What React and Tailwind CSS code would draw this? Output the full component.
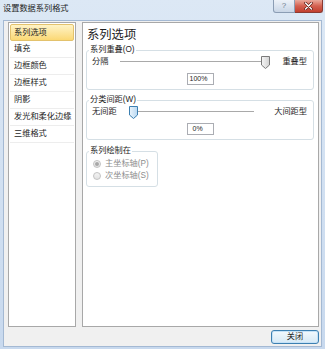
import React from 'react';

const FONT = { fontFamily: '"Liberation Sans", "Noto Sans CJK SC", sans-serif' };

const NAV_ITEMS = ['系列选项', '填充', '边框颜色', '边框样式', '阴影', '发光和柔化边缘', '三维格式'];

const Thumb = ({ active }) => (
    <svg width="9" height="13" viewBox="0 0 9 13">
        <defs>
            <linearGradient id={active ? 'thumbA' : 'thumbB'} x1="0" y1="0" x2="1" y2="0">
                <stop offset="0" stopColor={active ? '#eaf4fc' : '#f6f6f6'} />
                <stop offset="1" stopColor={active ? '#b9d8f2' : '#d2d2d2'} />
            </linearGradient>
        </defs>
        <path
            d="M0.5 0.5 H8.5 V9 L4.5 12.5 L0.5 9 Z"
            fill={`url(#${active ? 'thumbA' : 'thumbB'})`}
            stroke={active ? '#3c7fb1' : '#7a7a7a'}
            strokeWidth="1"
        />
    </svg>
);

const Slider = ({ at, active }) => (
    <div className="relative flex-1 h-[14px] flex items-center">
        <div
            className={`flex-1 h-[2px] border-t border-[#a9a9a9] bg-white ${at === 'left' ? 'mr-[8px]' : ''}`}
        />
        <div className={`absolute top-[1px] ${at === 'left' ? 'left-0' : 'right-0'}`}>
            <Thumb active={active} />
        </div>
    </div>
);

const Group = ({ label, className = '', children }) => (
    <fieldset className={`border border-[#d5dfe5] rounded-[3px] ${className}`}>
        <legend className="ml-[2px] px-[1px] leading-[10px] text-[8.2px] text-[#1e1e1e]">{label}</legend>
        {children}
    </fieldset>
);

const SliderGroup = ({ label, left, right, value, at, active, className, valuePad }) => (
    <Group label={label} className={className}>
        <div className="flex items-center h-[14px] pl-[5px] pr-[6px] text-[8.2px] leading-[10px] text-[#1e1e1e]">
            <span>{left}</span>
            <div className="flex-1 flex mx-[12px]">
                <Slider at={at} active={active} />
            </div>
            <span>{right}</span>
        </div>
        <div className="flex justify-center mt-[4px] pb-[4px]">
            <div
                className={`w-[27px] h-[12px] border border-[#abadb3] bg-white text-[7px] leading-[10px] text-[#1e1e1e] ${valuePad}`}
            >
                {value}
            </div>
        </div>
    </Group>
);

const Radio = ({ checked, label }) => (
    <div className="flex items-center h-[12px] pl-[6px] text-[8.2px] leading-[10px] text-[#8d8d8d]">
        <span className="w-[8px] h-[8px] rounded-full border border-[#c2c2c2] bg-gradient-to-b from-[#f4f4f4] to-[#e2e2e2] flex items-center justify-center">
            {checked && <span className="w-[4px] h-[4px] rounded-full bg-[#a8a8a8]" />}
        </span>
        <span className="ml-[4px]">{label}</span>
    </div>
);

export default function App() {
    return (
        <div
            style={FONT}
            className="w-[325px] h-[349px] flex flex-col bg-gradient-to-b from-[#dce8f5] to-[#c8d9ee] overflow-hidden"
        >
            {/* title bar */}
            <div className="h-[20px] flex items-start">
                <span className="pl-[3px] pt-[4px] text-[8.2px] leading-[10px] text-[#1e1e1e]">设置数据系列格式</span>
                <div className="ml-auto mr-[2px] flex">
                    <div className="w-[22px] h-[13px] border border-t-0 border-[#8b9db4] rounded-bl-[3px] bg-gradient-to-b from-[#edf2f8] to-[#c9d6e6] flex items-center justify-center text-[8px] leading-[8px] text-[#6f7d8e]">
                        ?
                    </div>
                    <div className="w-[28px] h-[13px] border border-t-0 border-l-0 border-[#8a3a31] rounded-br-[3px] bg-gradient-to-b from-[#e9a99c] via-[#d46050] to-[#c23f2e] flex items-center justify-center">
                        <svg width="9" height="8" viewBox="0 0 9 8">
                            <path d="M1.5 1 L7.5 7 M7.5 1 L1.5 7" stroke="#5b1a14" strokeWidth="2.6" strokeLinecap="round" />
                            <path d="M1.5 1 L7.5 7 M7.5 1 L1.5 7" stroke="#ffffff" strokeWidth="1.4" strokeLinecap="round" />
                        </svg>
                    </div>
                </div>
            </div>

            {/* client area */}
            <div className="flex-1 mx-[3px] mb-[2px] border border-[#a4b9d3] bg-[#f0f0f0] flex flex-col pl-[4px] pr-[2px] pt-[1px]">
                <div className="flex gap-[6px] h-[305px]">
                    {/* left nav */}
                    <div className="w-[68px] bg-white border border-[#a8a8a8] pt-[1px] px-[1px]">
                        {NAV_ITEMS.map((item, i) => (
                            <div
                                key={item}
                                className={
                                    i === 0
                                        ? 'h-[17px] border border-[#e3c26d] rounded-[2px] bg-gradient-to-b from-[#fef3c6] to-[#fbd873] pl-[3px] flex items-center text-[8.2px] leading-[10px] text-[#1e1e1e]'
                                        : 'h-[17px] border-b border-[#ededed] pl-[4px] flex items-center text-[8.2px] leading-[10px] text-[#1e1e1e]'
                                }
                            >
                                {item}
                            </div>
                        ))}
                    </div>

                    {/* right panel */}
                    <div className="flex-1 bg-white border border-[#a8a8a8] pl-[3px] pr-[4px] pt-[5px]">
                        <div className="pl-[1px] text-[12.3px] leading-[14px] text-[#1e1e1e]">系列选项</div>
                        <SliderGroup
                            className="mt-[3px]"
                            label="系列重叠(O)"
                            left="分隔"
                            right="重叠型"
                            value="100%"
                            at="right"
                            valuePad="pl-[2px]"
                        />
                        <SliderGroup
                            className="mt-[5px]"
                            label="分类间距(W)"
                            left="无间距"
                            right="大间距型"
                            value="0%"
                            at="left"
                            active
                            valuePad="pl-[5px]"
                        />
                        <Group label="系列绘制在" className="mt-[6px] w-[72px] pt-[2px] pb-[4px]">
                            <Radio checked label="主坐标轴(P)" />
                            <Radio label="次坐标轴(S)" />
                        </Group>
                    </div>
                </div>

                <div className="flex justify-end pt-[3px]">
                    <button className="w-[48px] h-[14px] rounded-[3px] border border-[#3c7fb1] bg-gradient-to-b from-[#f3f9fd] to-[#d6e9f6] shadow-[inset_0_0_0_1px_#c5e2f7] text-[8.2px] leading-[10px] text-[#1e1e1e]">
                        关闭
                    </button>
                </div>
            </div>
        </div>
    );
}
